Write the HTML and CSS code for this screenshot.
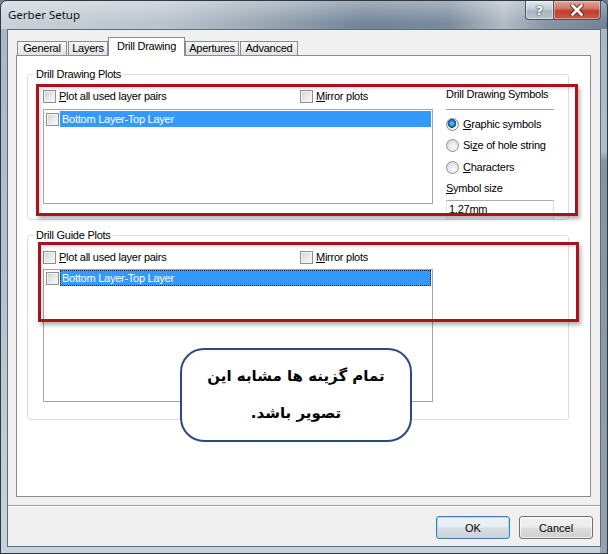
FILE: index.html
```html
<!DOCTYPE html>
<html>
<head>
<meta charset="utf-8">
<title>Gerber Setup</title>
<link rel="stylesheet" href="styles.css">
</head>
<body>
<div class="window">
  <div class="titlebar">
    <span class="title">Gerber Setup</span>
    <div class="caption">
      <span class="cap-btn help">?</span>
      <span class="cap-btn close">
        <svg width="14" height="12" viewBox="0 0 14 12">
          <path d="M2.5 1.5 L11.5 10.5 M11.5 1.5 L2.5 10.5" stroke="#5a1c14" stroke-width="4.6" stroke-linecap="square" fill="none" opacity="0.75"/>
          <path d="M2.5 1.5 L11.5 10.5 M11.5 1.5 L2.5 10.5" stroke="#ffffff" stroke-width="2.6" stroke-linecap="square" fill="none"/>
        </svg>
      </span>
    </div>
  </div>
  <div class="client">
    <div class="tabs">
      <span class="tab t-general">General</span>
      <span class="tab t-layers">Layers</span>
      <span class="tab t-drill active">Drill Drawing</span>
      <span class="tab t-apert">Apertures</span>
      <span class="tab t-adv">Advanced</span>
    </div>
    <div class="panel">
      <fieldset class="group g1">
        <legend>Drill Drawing Plots</legend>
        <div class="g1-grid">
          <div class="leftcol">
            <div class="checks">
              <label class="chk"><span class="box"></span><span><u>P</u>lot all used layer pairs</span></label>
              <label class="chk"><span class="box"></span><span><u>M</u>irror plots</span></label>
            </div>
            <div class="list l1">
              <div class="row"><span class="box"></span><span class="sel">Bottom Layer-Top Layer</span></div>
            </div>
          </div>
          <div class="rightcol">
            <div class="sym-title">Drill Drawing Symbols</div>
            <div class="sep"></div>
            <label class="radio r-first"><span class="dot on"></span><span><u>G</u>raphic symbols</span></label>
            <label class="radio"><span class="dot"></span><span>Si<u>z</u>e of hole string</span></label>
            <label class="radio r-third"><span class="dot"></span><span><u>C</u>haracters</span></label>
            <div class="sym-size"><u>S</u>ymbol size</div>
            <div class="input">1.27mm</div>
          </div>
        </div>
      </fieldset>
      <fieldset class="group g2">
        <legend>Drill Guide Plots</legend>
        <div class="g2-body">
          <div class="checks">
            <label class="chk"><span class="box"></span><span><u>P</u>lot all used layer pairs</span></label>
            <label class="chk"><span class="box"></span><span><u>M</u>irror plots</span></label>
          </div>
          <div class="list l2">
            <div class="row"><span class="box"></span><span class="sel focus">Bottom Layer-Top Layer</span></div>
          </div>
        </div>
      </fieldset>
      <div class="redbox rb1"></div>
      <div class="redbox rb2"></div>
      <div class="callout" dir="rtl">
        <p>تمام گزینه ها مشابه این</p>
        <p>تصویر باشد.</p>
      </div>
    </div>
    <div class="footer">
      <button class="btn default">OK</button>
      <button class="btn">Cancel</button>
    </div>
  </div>
</div>
</body>
</html>
```

FILE: styles.css
```css
* { box-sizing: border-box; }
html, body { margin: 0; padding: 0; }
body {
  width: 608px;
  height: 554px;
  overflow: hidden;
  font-family: "Liberation Sans", Arial, sans-serif;
  font-size: 11px;
  letter-spacing: -0.25px;
  color: #000;
  background: #6f8397;
}

.window {
  width: 608px;
  height: 554px;
  border: 1px solid #2f3843;
  border-radius: 7px 7px 0 0;
  background:
    linear-gradient(180deg, rgba(255,255,255,0.35) 0px, rgba(255,255,255,0) 22px) 0 0 / 100% 28px no-repeat,
    linear-gradient(90deg, #cbd2d9 0%, #b9c3cc 28%, #93a2b0 46%, #71849a 60%, #7a8c9e 74%, #b3bcc5 83%, #8796a5 90%, #6f8398 100%) 0 0 / 100% 28px no-repeat,
    linear-gradient(180deg, rgba(0,0,0,0) 150px, rgba(60,70,80,0.35) 160px) 100% 0 / 7px 100% no-repeat,
    linear-gradient(180deg, #a9b7c5 0%, #b7c5d2 60%, #c6d3de 100%);
  display: flex;
  flex-direction: column;
  overflow: hidden;
}

/* title bar */
.titlebar {
  height: 28px;
  display: flex;
  align-items: flex-start;
  flex: none;
}
.title {
  font-family: "Noto Sans", "Open Sans", sans-serif;
  font-size: 11.5px;
  letter-spacing: 0;
  line-height: 28px;
  padding-left: 7px;
  color: #101418;
}
.caption {
  margin-left: auto;
  margin-right: 6px;
  margin-top: -1px;
  display: flex;
}
.cap-btn {
  height: 20px;
  display: flex;
  align-items: center;
  justify-content: center;
  border: 1px solid #4a5562;
  border-top-color: #5c6772;
}
.help {
  width: 28px;
  border-right: none;
  border-radius: 0 0 0 4px;
  background: linear-gradient(180deg, #e4e9ee 0%, #c4cdd6 45%, #a9b5c1 55%, #b8c3ce 100%);
  box-shadow: inset 0 0 0 1px rgba(255,255,255,0.45);
  color: #fff;
  font-family: "DejaVu Sans", sans-serif;
  font-weight: bold;
  font-size: 13px;
  letter-spacing: 0;
  text-shadow: 0 0 2px #2a3440, 0 0 1px #2a3440;
}
.close {
  width: 48px;
  border-radius: 0 0 4px 0;
  background: linear-gradient(180deg, #e5a89c 0%, #d07a68 40%, #c0402c 55%, #c85a44 100%);
  box-shadow: inset 0 0 0 1px rgba(255,220,210,0.45);
}

/* client area */
.client {
  margin-left: 6px;
  width: 594px;
  height: 518px;
  border: 1px solid #5d6c7b;
  background: #f0f0f0;
  display: flex;
  flex-direction: column;
}

.tabs {
  display: flex;
  align-items: flex-end;
  height: 25px;
  padding: 7px 0 0 9px;
  flex: none;
}
.tab {
  height: 14px;
  line-height: 13px;
  text-align: center;
  border: 1px solid #898c95;
  border-bottom: none;
  background: linear-gradient(180deg, #f7f7f7 0%, #ececec 50%, #e1e1e1 100%);
  color: #000;
  white-space: nowrap;
}
.t-general { width: 50px; }
.t-layers { width: 40px; margin-left: 1px; }
.t-drill { width: 77px; }
.t-apert { width: 54px; }
.t-adv { width: 58px; margin-left: 1px; }
.tab.active {
  height: 19px;
  line-height: 16px;
  margin-bottom: -1px;
  background: #fff;
  position: relative;
  z-index: 1;
}

.panel {
  position: relative;
  margin-left: 8px;
  width: 575px;
  height: 442px;
  border: 1px solid #898c95;
  background: #fff;
  flex: none;
}

/* group boxes */
.group {
  margin: 12px 0 0 10px;
  width: 542px;
  padding: 0 0 0 6px;
  border: 1px solid #d5dfe5;
  border-radius: 3px;
  min-inline-size: 0;
}
.group legend {
  padding: 0 2px;
  line-height: 13px;
  color: #000;
}
.g1 { height: 152px; }
.g2 { height: 191px; margin-top: 9px; }

.g1-grid {
  margin-left: 9px;
  display: grid;
  grid-template-columns: 390px 108px;
  column-gap: 13px;
}
.g2-body { margin-left: 9px; width: 390px; }

.checks {
  margin-top: 7px;
  height: 16px;
  display: grid;
  grid-template-columns: 257px auto;
}
.chk, .radio {
  display: flex;
  align-items: center;
  gap: 3px;
  line-height: 16px;
  height: 16px;
  white-space: nowrap;
}
.box {
  width: 13px;
  height: 13px;
  flex: none;
  border: 1px solid #8e8f8f;
  background: linear-gradient(135deg, #cfd1d4 0%, #e9eaeb 55%, #fbfbfb 100%);
  box-shadow: inset 0 0 0 1px #f3f3f3;
}

.list {
  margin-top: 5px;
  border: 1px solid #a5a5a5;
  background: #fff;
  padding: 1px;
}
.l1 { height: 95px; }
.l2 { height: 133px; margin-top: 4px; padding-top: 0; }
.row {
  display: flex;
  align-items: center;
  height: 16px;
  padding-left: 1px;
}
.row .box { margin-right: 1px; }
.sel {
  flex: 1;
  height: 16px;
  line-height: 16px;
  background: #3399ff;
  color: #fff;
  padding-left: 2px;
  white-space: nowrap;
}
.sel.focus {
  border: 1px dotted #1a1a1a;
  line-height: 14px;
  padding-left: 1px;
}

/* right column */
.sym-title {
  margin-top: 7px;
  line-height: 13px;
  white-space: nowrap;
}
.sep {
  margin-top: 8px;
  height: 1px;
  background: #a0a0a0;
  box-shadow: 0 1px 0 #fff;
}
.radio { gap: 4px; margin-top: 5px; }
.radio.r-first { margin-top: 6px; }
.radio.r-third { margin-top: 6px; }
.dot {
  width: 13px;
  height: 13px;
  flex: none;
  border-radius: 50%;
  border: 1px solid #8e8f8f;
  background: radial-gradient(circle at 60% 65%, #fbfbfb 0%, #e4e4e4 55%, #cbcbcb 100%);
}
.dot.on {
  background:
    radial-gradient(circle at 45% 40%, #8fd0f8 0px, #2d86c9 2.5px, #0d4f8c 4.2px, rgba(13,79,140,0) 4.6px),
    radial-gradient(circle at 60% 65%, #fbfbfb 0%, #e4e4e4 55%, #cbcbcb 100%);
}
.sym-size {
  margin-top: 5px;
  line-height: 16px;
}
.input {
  margin-top: 4px;
  height: 19px;
  border: 1px solid #abadb3;
  border-color: #abadb3 #dbdfe6 #e3e9ef #e2e3ea;
  background: #fff;
  line-height: 17px;
  padding-left: 2px;
}

/* annotation overlays */
.redbox {
  position: absolute;
  border: 3px solid #a8141d;
  box-shadow: 2px 3px 4px rgba(0,0,0,0.3), inset 2px 2px 3px rgba(0,0,0,0.12);
  pointer-events: none;
}
.rb1 { left: 19px; top: 28px; width: 542px; height: 132px; }
.rb2 { left: 21px; top: 186px; width: 541px; height: 80px; }

.callout {
  position: absolute;
  left: 163px;
  top: 292px;
  width: 232px;
  height: 94px;
  border: 2px solid #2d4a78;
  border-radius: 24px;
  background: #fff;
  display: flex;
  flex-direction: column;
  justify-content: center;
  align-items: center;
  font-family: "DejaVu Sans", sans-serif;
  font-weight: bold;
  font-size: 15px;
  letter-spacing: 0;
}
.callout p {
  margin: 0;
  line-height: 37px;
}

/* footer */
.footer {
  margin-top: 8px;
  flex: 1;
  border-top: 1px solid #a0a0a0;
  box-shadow: inset 0 1px 0 #fff;
  display: flex;
  justify-content: flex-end;
  align-items: flex-start;
  padding: 10px 7px 0 0;
  gap: 9px;
}
.btn {
  width: 74px;
  height: 23px;
  border: 1px solid #707070;
  border-radius: 3px;
  background: linear-gradient(180deg, #f2f2f2 0%, #ebebeb 48%, #dddddd 52%, #cfcfcf 100%);
  box-shadow: inset 0 0 0 1px rgba(255,255,255,0.7);
  font-family: "Liberation Sans", Arial, sans-serif;
  font-size: 11px;
  letter-spacing: 0;
  color: #000;
  padding: 0;
}
.btn.default {
  border-color: #3c7fb1;
  box-shadow: inset 0 0 0 1px #a6dcf6;
  background: linear-gradient(180deg, #eef3f6 0%, #e6ecf0 48%, #d6dde3 52%, #cad3da 100%);
}
```
